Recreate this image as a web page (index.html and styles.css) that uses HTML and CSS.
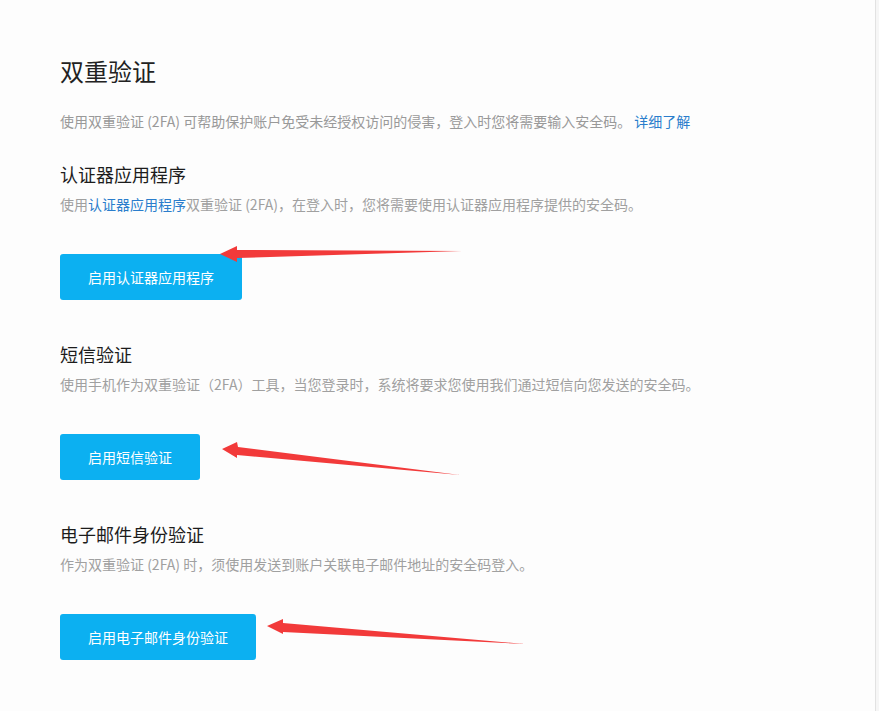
FILE: index.html
```html
<!DOCTYPE html>
<html lang="zh-CN">

<head>
  <meta charset="utf-8">
  <title>双重验证</title>
  <link rel="stylesheet" href="styles.css">
</head>

<body>

  <div class="main-container">
    <h1>双重验证</h1>
    <p class="intro">使用双重验证 (2FA) 可帮助保护账户免受未经授权访问的侵害，登入时您将需要输入安全码。 <a href="#">详细了解</a></p>

    <div class="section">
      <h2>认证器应用程序</h2>
      <p class="desc">使用<a href="#">认证器应用程序</a>双重验证 (2FA)，在登入时，您将需要使用认证器应用程序提供的安全码。</p>
      <button>启用认证器应用程序</button>
    </div>

    <div class="section">
      <h2>短信验证</h2>
      <p class="desc">使用手机作为双重验证（2FA）工具，当您登录时，系统将要求您使用我们通过短信向您发送的安全码。</p>
      <button>启用短信验证</button>
    </div>

    <div class="section">
      <h2>电子邮件身份验证</h2>
      <p class="desc">作为双重验证 (2FA) 时，须使用发送到账户关联电子邮件地址的安全码登入。</p>
      <button>启用电子邮件身份验证</button>
    </div>
  </div>

  <!-- annotation arrows drawn over the page -->
  <svg class="arrows" width="879" height="711" viewBox="0 0 879 711">
    <polygon points="220,254 237,246 237,250 462,251 237,258 237,262" />
    <polygon points="222,449 237,442 238,447 460,475 237,455 237,458" />
    <polygon points="267,626 283,619 283,623 525,644 283,632 283,634" />
  </svg>

</body>

</html>
```

FILE: styles.css
```css
body {
  margin: 0;
  background-color: #f6f6f6;
  font-family: "Noto Sans CJK SC", "Liberation Sans", sans-serif;
}

.main-container {
  box-sizing: border-box;
  width: 876px;
  min-height: 711px;
  padding: 55px 0 0 60px;
  background-color: #fdfdfd;
  border-right: 1px solid #e2e2e2;
}

h1 {
  margin: 0;
  font-size: 24px;
  line-height: 32px;
  font-weight: normal;
  color: #222;
}

.intro {
  margin: 24px 0 0;
  font-size: 14px;
  line-height: 20px;
  color: #999;
}

a {
  color: #2a7dcc;
  text-decoration: none;
}

.section {
  padding-top: 31px;
}

.section + .section {
  padding-top: 42px;
}

h2 {
  margin: 0;
  font-size: 18px;
  line-height: 24px;
  font-weight: normal;
  color: #1c1c1c;
}

.desc {
  margin: 8px 0 0;
  font-size: 14px;
  line-height: 20px;
  color: #a0a0a0;
}

button {
  display: block;
  margin-top: 40px;
  height: 46px;
  padding: 0 28px;
  border: none;
  border-radius: 3px;
  background-color: #0cb0f1;
  color: white;
  font-family: inherit;
  font-size: 14px;
  cursor: pointer;
}

.arrows {
  position: absolute;
  top: 0;
  left: 0;
  pointer-events: none;
}

.arrows polygon {
  fill: #f23a3a;
}
```
